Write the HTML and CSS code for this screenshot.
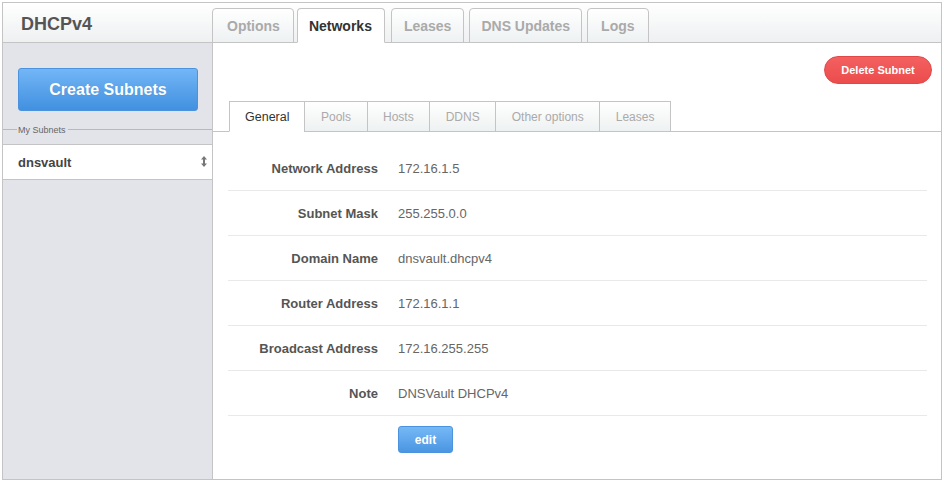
FILE: index.html
```html
<!DOCTYPE html>
<html>
<head>
<meta charset="utf-8">
<title>DHCPv4</title>
<link rel="stylesheet" href="styles.css">
</head>
<body>
<div class="frame">
  <div class="header">
    <div class="brand">DHCPv4</div>
    <div class="tabs">
      <div class="tab tab-options">Options</div>
      <div class="tab active">Networks</div>
      <div class="tab">Leases</div>
      <div class="tab tab-dns">DNS Updates</div>
      <div class="tab tab-logs">Logs</div>
    </div>
  </div>
  <div class="body">
    <div class="sidebar">
      <button class="btn-create">Create Subnets</button>
      <div class="legend"><span class="legend-line short"></span><span class="legend-text">My Subnets</span><span class="legend-line"></span></div>
      <div class="subnet-item">
        <span>dnsvault</span>
        <svg class="sort-icon" width="6" height="11" viewBox="0 0 6 11"><path d="M3 0 L6 3.5 L4 3.5 L4 7.5 L6 7.5 L3 11 L0 7.5 L2 7.5 L2 3.5 L0 3.5 Z" fill="#777"/></svg>
      </div>
    </div>
    <div class="main">
      <div class="actions"><button class="btn-delete">Delete Subnet</button></div>
      <div class="subtabs">
        <div class="subtab active">General</div>
        <div class="subtab">Pools</div>
        <div class="subtab">Hosts</div>
        <div class="subtab">DDNS</div>
        <div class="subtab">Other options</div>
        <div class="subtab">Leases</div>
      </div>
      <div class="details">
        <div class="row"><div class="label">Network Address</div><div class="value">172.16.1.5</div></div>
        <div class="row"><div class="label">Subnet Mask</div><div class="value">255.255.0.0</div></div>
        <div class="row"><div class="label">Domain Name</div><div class="value">dnsvault.dhcpv4</div></div>
        <div class="row"><div class="label">Router Address</div><div class="value">172.16.1.1</div></div>
        <div class="row"><div class="label">Broadcast Address</div><div class="value">172.16.255.255</div></div>
        <div class="row"><div class="label">Note</div><div class="value">DNSVault DHCPv4</div></div>
        <button class="btn-edit">edit</button>
      </div>
    </div>
  </div>
</div>
</body>
</html>
```
FILE: styles.css
```css
* { box-sizing: border-box; }
html, body { margin: 0; padding: 0; background: #fff; }
body {
  font-family: "Liberation Sans", Arial, sans-serif;
  color: #555;
}
.frame {
  margin: 2px 0 0 2px;
  width: 940px;
  height: 478px;
  border: 1px solid #c4c4c4;
  display: flex;
  flex-direction: column;
}
.header {
  height: 40px;
  flex: none;
  display: flex;
  align-items: flex-end;
  border-bottom: 1px solid #c4c4c4;
  background: linear-gradient(#ffffff, #eef0f1);
}
.brand {
  width: 209px;
  align-self: stretch;
  padding-left: 18px;
  padding-top: 4px;
  display: flex;
  align-items: center;
  font-weight: bold;
  font-size: 18px;
  color: #555;
}
.tabs {
  display: flex;
  align-items: flex-end;
  gap: 5px;
}
.tab {
  height: 35px;
  margin-bottom: -1px;
  padding: 0 12px;
  border: 1px solid #c4c4c4;
  border-radius: 4px 4px 0 0;
  background: linear-gradient(#ffffff, #eef1f2);
  font-weight: bold;
  font-size: 14px;
  color: #aaa;
  display: flex;
  align-items: center;
}
.tab-options { padding: 0 13px 0 14px; margin-right: -2px; }
.tab-dns { padding: 0 11px; }
.tab-logs { padding: 0 13px; }
.tab.active {
  background: #fff;
  border-bottom-color: #fff;
  color: #333;
  padding: 0 12px 0 11px;
  margin-right: 1px;
}
.body {
  flex: 1;
  display: flex;
}
.sidebar {
  width: 210px;
  flex: none;
  background: #e3e4e9;
  border-right: 1px solid #c4c4c4;
  padding-top: 25px;
  display: flex;
  flex-direction: column;
}
.btn-create {
  margin-left: 15px;
  width: 180px;
  height: 43px;
  border: 1px solid #4b93dc;
  border-radius: 3px;
  background: linear-gradient(#72b6f6, #4290e0);
  color: #fff;
  font-family: "Liberation Sans", Arial, sans-serif;
  font-weight: bold;
  font-size: 16px;
  text-shadow: 0 0 1px rgba(0,0,0,0.15);
  padding: 0;
}
.legend {
  margin-top: 13px;
  height: 11px;
  display: flex;
  align-items: center;
}
.legend-line {
  flex: 1;
  height: 1px;
  background: #b9b9bd;
}
.legend-line.short { flex: none; width: 14px; }
.legend-text {
  font-size: 9px;
  color: #666;
  padding: 0 2px 0 1px;
}
.subnet-item {
  margin-top: 9px;
  height: 36px;
  flex: none;
  background: #fff;
  border-top: 1px solid #c4c4c4;
  border-bottom: 1px solid #c4c4c4;
  padding: 0 5px 0 15px;
  display: flex;
  align-items: center;
  justify-content: space-between;
  font-weight: bold;
  font-size: 13px;
  color: #444;
}
.sort-icon { display: block; margin-top: -1px; }
.main {
  flex: 1;
  background: #fff;
  padding-top: 13px;
  display: flex;
  flex-direction: column;
}
.actions {
  display: flex;
  justify-content: flex-end;
  padding-right: 9px;
}
.btn-delete {
  width: 108px;
  height: 28px;
  border: 1px solid #e04848;
  border-radius: 14px;
  background: linear-gradient(#f46060, #ec4c4c);
  color: #fff;
  font-family: "Liberation Sans", Arial, sans-serif;
  font-weight: bold;
  font-size: 11px;
  padding: 0;
}
.subtabs {
  margin-top: 18px;
  display: flex;
  align-items: flex-end;
  padding-left: 16px;
  border-bottom: 1px solid #c4c4c4;
  height: 30px;
}
.subtab {
  height: 31px;
  margin-bottom: -1px;
  margin-left: -1px;
  padding: 0 15.5px;
  border: 1px solid #c4c4c4;
  background: linear-gradient(#ffffff, #eef1f2);
  font-size: 12px;
  color: #aaa;
  display: flex;
  align-items: center;
}
.subtab:first-child { margin-left: 0; padding: 0 15px; }
.subtab.active {
  background: #fff;
  border-bottom-color: #fff;
  color: #333;
  font-size: 12.5px;
}
.details {
  margin: 14px 14px 0 15px;
  display: flex;
  flex-direction: column;
  align-items: flex-start;
}
.row {
  width: 100%;
  height: 45px;
  display: flex;
  align-items: center;
  gap: 20px;
  border-bottom: 1px solid #e9e9e9;
  font-size: 13px;
}
.label {
  width: 150px;
  text-align: right;
  font-weight: bold;
  color: #555;
}
.value {
  color: #666;
}
.btn-edit {
  margin-top: 10px;
  margin-left: 170px;
  width: 55px;
  height: 27px;
  border: 1px solid #4b93dc;
  border-radius: 3px;
  background: linear-gradient(#76b8f6, #4a96e2);
  color: #fff;
  font-family: "Liberation Sans", Arial, sans-serif;
  font-weight: bold;
  font-size: 12px;
  padding: 0;
}
```
